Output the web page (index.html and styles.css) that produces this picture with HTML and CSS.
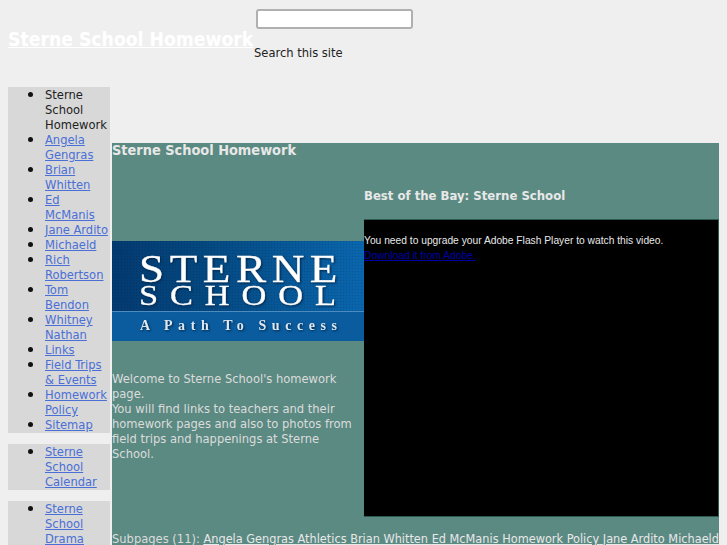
FILE: index.html
```html
<!DOCTYPE html>
<html lang="en">
<head>
<meta charset="utf-8">
<title>Sterne School Homework</title>
<link rel="stylesheet" href="styles.css">
</head>
<body>
<header class="header">
  <h1 class="site-title"><a href="#">Sterne School Homework</a></h1>
  <form class="search">
    <input class="search-input" type="text" aria-label="Search">
    <div class="search-label">Search this site</div>
  </form>
</header>
<div class="layout">
  <nav class="sidebar">
    <ul class="nav-box">
      <li>Sterne School Homework</li>
      <li><a href="#">Angela Gengras</a></li>
      <li><a href="#">Brian Whitten</a></li>
      <li><a href="#">Ed McManis</a></li>
      <li><a href="#">Jane Ardito</a></li>
      <li><a href="#">Michaeld</a></li>
      <li><a href="#">Rich Robertson</a></li>
      <li><a href="#">Tom Bendon</a></li>
      <li><a href="#">Whitney Nathan</a></li>
      <li><a href="#">Links</a></li>
      <li><a href="#">Field Trips &amp; Events</a></li>
      <li><a href="#">Homework Policy</a></li>
      <li><a href="#">Sitemap</a></li>
    </ul>
    <ul class="nav-box">
      <li><a href="#">Sterne School Calendar</a></li>
    </ul>
    <ul class="nav-box">
      <li><a href="#">Sterne School Drama</a></li>
    </ul>
  </nav>
  <main class="main">
    <h2 class="page-title">Sterne School Homework</h2>
    <div class="columns">
      <div class="col-left">
        <svg class="logo" viewBox="0 0 252 100" role="img" aria-label="Sterne School logo">
          <defs>
            <linearGradient id="logoTop" x1="0" x2="1" y1="0" y2="0">
              <stop offset="0" stop-color="#033a70"/>
              <stop offset="0.35" stop-color="#04477f"/>
              <stop offset="1" stop-color="#0a66ad"/>
            </linearGradient>
            <pattern id="logoDots" width="3" height="3" patternUnits="userSpaceOnUse">
              <rect width="1" height="1" fill="#000000" opacity="0.14"/>
            </pattern>
          </defs>
          <rect width="252" height="100" fill="url(#logoTop)"/>
          <rect width="252" height="100" fill="url(#logoDots)"/>
          <rect y="71" width="252" height="29" fill="#0a5c9e"/>
          <rect y="70" width="252" height="1" fill="#4c8cc0"/>
          <text class="logo-big" x="27" y="41" textLength="204" lengthAdjust="spacingAndGlyphs">STERNE</text>
          <text class="logo-mid" x="27" y="64" textLength="209" lengthAdjust="spacingAndGlyphs">SCHOOL</text>
          <text class="logo-small" x="28" y="89" textLength="197">A Path To Success</text>
        </svg>
        <p class="intro">Welcome to Sterne School's homework page.<br>You will find links to teachers and their homework pages and also to photos from field trips and happenings at Sterne School.</p>
      </div>
      <div class="col-right">
        <h3 class="video-title">Best of the Bay: Sterne School</h3>
        <div class="video">
          <p class="video-msg">You need to upgrade your Adobe Flash Player to watch this video.<br><a href="#">Download it from Adobe.</a></p>
        </div>
      </div>
    </div>
    <div class="subpages">Subpages (11): <span class="subpage-links"><a href="#">Angela Gengras</a> <a href="#">Athletics</a> <a href="#">Brian Whitten</a> <a href="#">Ed McManis</a> <a href="#">Homework Policy</a> <a href="#">Jane Ardito</a> <a href="#">Michaeld</a></span></div>
  </main>
</div>
</body>
</html>
```
FILE: styles.css
```css
html {
  height: 100%;
  overflow: hidden;
}
body {
  margin: 0;
  padding: 0 8px;
  height: 100%;
  background: #efefef;
  color: #222222;
  font: 12.8px/15px "DejaVu Sans Condensed", "DejaVu Sans", sans-serif;
  overflow: hidden;
}
.header {
  display: flex;
  height: 87px;
}
.site-title {
  margin: 30px 0 0;
  width: 246px;
  flex: none;
  font-size: 19.2px;
  line-height: 20px;
  white-space: nowrap;
}
.site-title a {
  color: #ffffff;
}
.search {
  padding-top: 9px;
}
.search-input {
  display: block;
  box-sizing: border-box;
  width: 157px;
  height: 20px;
  margin: 0 0 0 2px;
  padding: 1px 2px;
  background: #ffffff;
  border: 2px solid #b0b0b0;
  border-radius: 3px;
}
.search-label {
  margin-top: 16px;
}
.layout {
  display: flex;
  align-items: flex-start;
}
.sidebar {
  width: 102px;
  flex: none;
}
.nav-box {
  margin: 0 0 11px;
  padding: 0 0 1px 37px;
  background: #d8d8d8;
  list-style: none;
}
.nav-box li {
  position: relative;
}
.nav-box li::before {
  content: "";
  position: absolute;
  left: -17px;
  top: 5px;
  width: 5px;
  height: 5px;
  border-radius: 50%;
  background: #111111;
}
.nav-box a {
  color: #4a6fd6;
}
.main {
  margin: 56px 0 0 2px;
  width: 607px;
  height: 460px;
  flex: none;
  background: #5b8a82;
  color: #dcdcdc;
}
.page-title {
  margin: 0;
  height: 41px;
  color: #e8e8e8;
  font-size: 14.4px;
  line-height: 15px;
  font-weight: bold;
}
.columns {
  display: flex;
}
.col-left {
  width: 252px;
  flex: none;
  padding-top: 57px;
}
.logo {
  display: block;
  width: 252px;
  height: 100px;
}
.logo-big,
.logo-mid,
.logo-small {
  filter: drop-shadow(1px 1px 1px #02264a);
}
.logo-big {
  fill: #ffffff;
  stroke: #ffffff;
  stroke-width: 0.3px;
  font: 41px "Liberation Serif", serif;
  letter-spacing: 5px;
}
.logo-mid {
  fill: #ffffff;
  stroke: #ffffff;
  stroke-width: 0.3px;
  font: 29px "Liberation Serif", serif;
  letter-spacing: 10px;
}
.logo-small {
  fill: #dfe8f0;
  font: bold 14px "Liberation Serif", serif;
}
.intro {
  margin: 30px 0 0;
}
.col-right {
  width: 355px;
  flex: none;
}
.video-title {
  margin: 0;
  height: 31px;
  padding-top: 4px;
  color: #e8e8e8;
  font-size: 13px;
  line-height: 15px;
  font-weight: bold;
}
.video {
  box-sizing: border-box;
  height: 298px;
  background: #000000;
  border: 1px solid #2f5a53;
  border-width: 1px 1px 1px 0;
}
.video-msg {
  margin: 0;
  padding-top: 13px;
  color: #e8e8e8;
  font: 10.25px/15px "Liberation Sans", sans-serif;
}
.video-msg a {
  color: #0000aa;
}
.subpages {
  margin-top: 14px;
  white-space: nowrap;
  overflow: hidden;
}
.subpage-links {
  color: #e8e8e8;
  font-size: 12.6px;
  text-decoration: underline;
}
.subpages a {
  color: #e8e8e8;
}
```
